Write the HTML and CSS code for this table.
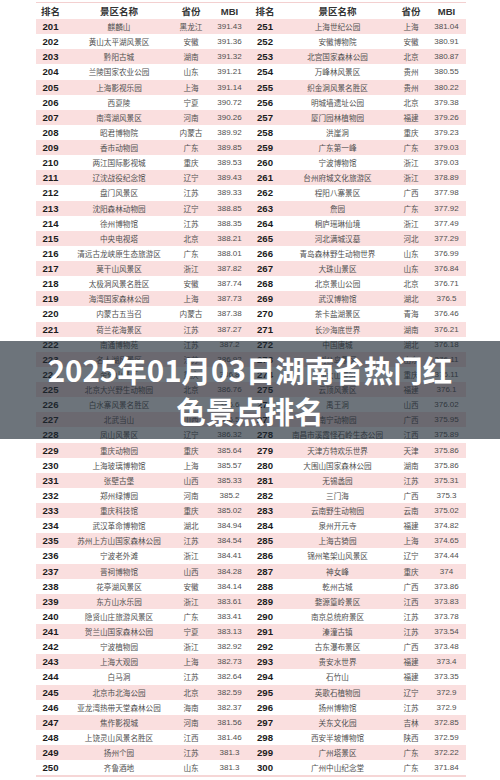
FILE: index.html
```html
<!DOCTYPE html>
<html lang="zh-CN">
<head>
<meta charset="utf-8">
<title>2025年01月03日湖南省热门红色景点排名</title>
<link rel="stylesheet" href="styles.css">
</head>
<body>
<div class="table">
  <div class="row head"><span>排名</span><span>景区名称</span><span>省份</span><span>MBI</span><span>排名</span><span>景区名称</span><span>省份</span><span>MBI</span></div>
  <div class="row alt"><span class="rk">201</span><span class="nm">麒麟山</span><span class="pv">黑龙江</span><span class="mb">391.43</span><span class="rk">251</span><span class="nm">上海世纪公园</span><span class="pv">上海</span><span class="mb">381.04</span></div>
  <div class="row"><span class="rk">202</span><span class="nm">黄山太平湖风景区</span><span class="pv">安徽</span><span class="mb">391.36</span><span class="rk">252</span><span class="nm">安徽博物院</span><span class="pv">安徽</span><span class="mb">380.91</span></div>
  <div class="row alt"><span class="rk">203</span><span class="nm">黔阳古城</span><span class="pv">湖南</span><span class="mb">391.32</span><span class="rk">253</span><span class="nm">北宫国家森林公园</span><span class="pv">北京</span><span class="mb">380.87</span></div>
  <div class="row"><span class="rk">204</span><span class="nm">兰陵国家农业公园</span><span class="pv">山东</span><span class="mb">391.21</span><span class="rk">254</span><span class="nm">万峰林风景区</span><span class="pv">贵州</span><span class="mb">380.55</span></div>
  <div class="row alt"><span class="rk">205</span><span class="nm">上海影视乐园</span><span class="pv">上海</span><span class="mb">391.14</span><span class="rk">255</span><span class="nm">织金洞风景名胜区</span><span class="pv">贵州</span><span class="mb">380.22</span></div>
  <div class="row"><span class="rk">206</span><span class="nm">西夏陵</span><span class="pv">宁夏</span><span class="mb">390.72</span><span class="rk">256</span><span class="nm">明城墙遗址公园</span><span class="pv">北京</span><span class="mb">379.38</span></div>
  <div class="row alt"><span class="rk">207</span><span class="nm">南湾湖风景区</span><span class="pv">河南</span><span class="mb">390.26</span><span class="rk">257</span><span class="nm">厦门园林植物园</span><span class="pv">福建</span><span class="mb">379.26</span></div>
  <div class="row"><span class="rk">208</span><span class="nm">昭君博物院</span><span class="pv">内蒙古</span><span class="mb">389.92</span><span class="rk">258</span><span class="nm">洪崖洞</span><span class="pv">重庆</span><span class="mb">379.23</span></div>
  <div class="row alt"><span class="rk">209</span><span class="nm">香市动物园</span><span class="pv">广东</span><span class="mb">389.85</span><span class="rk">259</span><span class="nm">广东第一峰</span><span class="pv">广东</span><span class="mb">379.03</span></div>
  <div class="row"><span class="rk">210</span><span class="nm">两江国际影视城</span><span class="pv">重庆</span><span class="mb">389.53</span><span class="rk">260</span><span class="nm">宁波博物馆</span><span class="pv">浙江</span><span class="mb">379.03</span></div>
  <div class="row alt"><span class="rk">211</span><span class="nm">辽沈战役纪念馆</span><span class="pv">辽宁</span><span class="mb">389.43</span><span class="rk">261</span><span class="nm">台州府城文化旅游区</span><span class="pv">浙江</span><span class="mb">378.89</span></div>
  <div class="row"><span class="rk">212</span><span class="nm">盘门风景区</span><span class="pv">江苏</span><span class="mb">389.33</span><span class="rk">262</span><span class="nm">程阳八寨景区</span><span class="pv">广西</span><span class="mb">377.98</span></div>
  <div class="row alt"><span class="rk">213</span><span class="nm">沈阳森林动物园</span><span class="pv">辽宁</span><span class="mb">388.85</span><span class="rk">263</span><span class="nm">詹园</span><span class="pv">广东</span><span class="mb">377.92</span></div>
  <div class="row"><span class="rk">214</span><span class="nm">徐州博物馆</span><span class="pv">江苏</span><span class="mb">388.35</span><span class="rk">264</span><span class="nm">桐庐瑶琳仙境</span><span class="pv">浙江</span><span class="mb">377.49</span></div>
  <div class="row alt"><span class="rk">215</span><span class="nm">中央电视塔</span><span class="pv">北京</span><span class="mb">388.21</span><span class="rk">265</span><span class="nm">河北满城汉墓</span><span class="pv">河北</span><span class="mb">377.29</span></div>
  <div class="row"><span class="rk">216</span><span class="nm">清远古龙峡原生态旅游区</span><span class="pv">广东</span><span class="mb">388.01</span><span class="rk">266</span><span class="nm">青岛森林野生动物世界</span><span class="pv">山东</span><span class="mb">376.99</span></div>
  <div class="row alt"><span class="rk">217</span><span class="nm">莫干山风景区</span><span class="pv">浙江</span><span class="mb">387.82</span><span class="rk">267</span><span class="nm">大珠山景区</span><span class="pv">山东</span><span class="mb">376.84</span></div>
  <div class="row"><span class="rk">218</span><span class="nm">太极洞风景名胜区</span><span class="pv">安徽</span><span class="mb">387.74</span><span class="rk">268</span><span class="nm">北京景山公园</span><span class="pv">北京</span><span class="mb">376.71</span></div>
  <div class="row alt"><span class="rk">219</span><span class="nm">海湾国家森林公园</span><span class="pv">上海</span><span class="mb">387.73</span><span class="rk">269</span><span class="nm">武汉博物馆</span><span class="pv">湖北</span><span class="mb">376.5</span></div>
  <div class="row"><span class="rk">220</span><span class="nm">内蒙古五当召</span><span class="pv">内蒙古</span><span class="mb">387.38</span><span class="rk">270</span><span class="nm">茶卡盐湖景区</span><span class="pv">青海</span><span class="mb">376.46</span></div>
  <div class="row alt"><span class="rk">221</span><span class="nm">荷兰花海景区</span><span class="pv">江苏</span><span class="mb">387.27</span><span class="rk">271</span><span class="nm">长沙海底世界</span><span class="pv">湖南</span><span class="mb">376.21</span></div>
  <div class="row"><span class="rk">222</span><span class="nm">南通博物苑</span><span class="pv">江苏</span><span class="mb">387.2</span><span class="rk">272</span><span class="nm">中国唐城</span><span class="pv">湖北</span><span class="mb">376.18</span></div>
  <div class="row alt"><span class="rk">223</span><span class="nm">名人湖风景区</span><span class="pv">江苏</span><span class="mb">386.92</span><span class="rk">273</span><span class="nm">刘公岛景区</span><span class="pv">山东</span><span class="mb">376.11</span></div>
  <div class="row"><span class="rk">224</span><span class="nm">金佛山景区</span><span class="pv">重庆</span><span class="mb">386.8</span><span class="rk">274</span><span class="nm">仙女山景区</span><span class="pv">重庆</span><span class="mb">376.11</span></div>
  <div class="row alt"><span class="rk">225</span><span class="nm">北京大兴野生动物园</span><span class="pv">北京</span><span class="mb">386.76</span><span class="rk">275</span><span class="nm">云顶风景区</span><span class="pv">福建</span><span class="mb">376.1</span></div>
  <div class="row"><span class="rk">226</span><span class="nm">白水寨风景名胜区</span><span class="pv">广东</span><span class="mb">386.6</span><span class="rk">276</span><span class="nm">禹王洞</span><span class="pv">山西</span><span class="mb">376.02</span></div>
  <div class="row alt"><span class="rk">227</span><span class="nm">北武当山</span><span class="pv">山西</span><span class="mb">386.5</span><span class="rk">277</span><span class="nm">南宁动物园</span><span class="pv">广西</span><span class="mb">375.95</span></div>
  <div class="row"><span class="rk">228</span><span class="nm">凤山风景区</span><span class="pv">辽宁</span><span class="mb">386.32</span><span class="rk">278</span><span class="nm">南昌市溪霞怪石岭生态公园</span><span class="pv">江西</span><span class="mb">375.89</span></div>
  <div class="row alt"><span class="rk">229</span><span class="nm">重庆动物园</span><span class="pv">重庆</span><span class="mb">385.64</span><span class="rk">279</span><span class="nm">天津方特欢乐世界</span><span class="pv">天津</span><span class="mb">375.86</span></div>
  <div class="row"><span class="rk">230</span><span class="nm">上海玻璃博物馆</span><span class="pv">上海</span><span class="mb">385.57</span><span class="rk">280</span><span class="nm">大围山国家森林公园</span><span class="pv">湖南</span><span class="mb">375.86</span></div>
  <div class="row alt"><span class="rk">231</span><span class="nm">张壁古堡</span><span class="pv">山西</span><span class="mb">385.33</span><span class="rk">281</span><span class="nm">无锡蠡园</span><span class="pv">江苏</span><span class="mb">375.31</span></div>
  <div class="row"><span class="rk">232</span><span class="nm">郑州绿博园</span><span class="pv">河南</span><span class="mb">385.2</span><span class="rk">282</span><span class="nm">三门海</span><span class="pv">广西</span><span class="mb">375.3</span></div>
  <div class="row alt"><span class="rk">233</span><span class="nm">重庆科技馆</span><span class="pv">重庆</span><span class="mb">385.02</span><span class="rk">283</span><span class="nm">云南野生动物园</span><span class="pv">云南</span><span class="mb">375.02</span></div>
  <div class="row"><span class="rk">234</span><span class="nm">武汉革命博物馆</span><span class="pv">湖北</span><span class="mb">384.94</span><span class="rk">284</span><span class="nm">泉州开元寺</span><span class="pv">福建</span><span class="mb">374.82</span></div>
  <div class="row alt"><span class="rk">235</span><span class="nm">苏州上方山国家森林公园</span><span class="pv">江苏</span><span class="mb">384.54</span><span class="rk">285</span><span class="nm">上海古猗园</span><span class="pv">上海</span><span class="mb">374.65</span></div>
  <div class="row"><span class="rk">236</span><span class="nm">宁波老外滩</span><span class="pv">浙江</span><span class="mb">384.41</span><span class="rk">286</span><span class="nm">锦州笔架山风景区</span><span class="pv">辽宁</span><span class="mb">374.44</span></div>
  <div class="row alt"><span class="rk">237</span><span class="nm">晋祠博物馆</span><span class="pv">山西</span><span class="mb">384.28</span><span class="rk">287</span><span class="nm">神女峰</span><span class="pv">重庆</span><span class="mb">374</span></div>
  <div class="row"><span class="rk">238</span><span class="nm">花亭湖风景区</span><span class="pv">安徽</span><span class="mb">384.14</span><span class="rk">288</span><span class="nm">乾州古城</span><span class="pv">广西</span><span class="mb">373.86</span></div>
  <div class="row alt"><span class="rk">239</span><span class="nm">东方山水乐园</span><span class="pv">浙江</span><span class="mb">383.61</span><span class="rk">289</span><span class="nm">婺源篁岭景区</span><span class="pv">江西</span><span class="mb">373.83</span></div>
  <div class="row"><span class="rk">240</span><span class="nm">隐贤山庄旅游风景区</span><span class="pv">广东</span><span class="mb">383.41</span><span class="rk">290</span><span class="nm">南京总统府景区</span><span class="pv">江苏</span><span class="mb">373.78</span></div>
  <div class="row alt"><span class="rk">241</span><span class="nm">贺兰山国家森林公园</span><span class="pv">宁夏</span><span class="mb">383.13</span><span class="rk">291</span><span class="nm">溱潼古镇</span><span class="pv">江苏</span><span class="mb">373.54</span></div>
  <div class="row"><span class="rk">242</span><span class="nm">宁波植物园</span><span class="pv">浙江</span><span class="mb">382.92</span><span class="rk">292</span><span class="nm">古东瀑布景区</span><span class="pv">广西</span><span class="mb">373.48</span></div>
  <div class="row alt"><span class="rk">243</span><span class="nm">上海大观园</span><span class="pv">上海</span><span class="mb">382.73</span><span class="rk">293</span><span class="nm">贵安水世界</span><span class="pv">福建</span><span class="mb">373.4</span></div>
  <div class="row"><span class="rk">244</span><span class="nm">白马洞</span><span class="pv">江苏</span><span class="mb">382.64</span><span class="rk">294</span><span class="nm">石竹山</span><span class="pv">福建</span><span class="mb">373.35</span></div>
  <div class="row alt"><span class="rk">245</span><span class="nm">北京市北海公园</span><span class="pv">北京</span><span class="mb">382.59</span><span class="rk">295</span><span class="nm">英歌石植物园</span><span class="pv">辽宁</span><span class="mb">372.9</span></div>
  <div class="row"><span class="rk">246</span><span class="nm">亚龙湾热带天堂森林公园</span><span class="pv">海南</span><span class="mb">382.37</span><span class="rk">296</span><span class="nm">扬州博物馆</span><span class="pv">江苏</span><span class="mb">372.9</span></div>
  <div class="row alt"><span class="rk">247</span><span class="nm">焦作影视城</span><span class="pv">河南</span><span class="mb">381.56</span><span class="rk">297</span><span class="nm">关东文化园</span><span class="pv">吉林</span><span class="mb">372.85</span></div>
  <div class="row"><span class="rk">248</span><span class="nm">上饶灵山风景名胜区</span><span class="pv">江西</span><span class="mb">381.46</span><span class="rk">298</span><span class="nm">西安半坡博物馆</span><span class="pv">陕西</span><span class="mb">372.59</span></div>
  <div class="row alt"><span class="rk">249</span><span class="nm">扬州个园</span><span class="pv">江苏</span><span class="mb">381.3</span><span class="rk">299</span><span class="nm">广州塔景区</span><span class="pv">广东</span><span class="mb">372.22</span></div>
  <div class="row"><span class="rk">250</span><span class="nm">齐鲁酒地</span><span class="pv">山东</span><span class="mb">381.3</span><span class="rk">300</span><span class="nm">广州中山纪念堂</span><span class="pv">广东</span><span class="mb">371.84</span></div>
</div>
<div class="banner">
  <h1 class="title">2025年01月03日湖南省热门红<br>色景点排名</h1>
</div>
</body>
</html>
```

FILE: styles.css
```css
html, body {
  margin: 0;
  padding: 0;
  background: #ffffff;
}

body {
  font-family: "Liberation Sans", "Noto Sans CJK SC", sans-serif;
  width: 500px;
  height: 780px;
  overflow: hidden;
}

.table {
  width: 430px;
  margin: 2px 0 0 36px;
  border-top: 1px solid #f3d0d0;
  border-bottom: 2px solid #f6d6d6;
}

.row {
  display: grid;
  grid-template-columns: 29px 108px 36px 41px 30px 115px 32px 39px;
  height: 15.13px;
  align-items: center;
  text-align: center;
  white-space: nowrap;
}

.row span {
  display: block;
  line-height: 15px;
}

.row.alt {
  background: #fadfdf;
}

.head {
  height: 16px;
  font-weight: 700;
  font-size: 9.5px;
  color: #333333;
}

.head span {
  line-height: 17px;
}

.rk {
  font-weight: 700;
  font-size: 9.6px;
  color: #1c1c1c;
}

.nm,
.pv {
  font-family: "Noto Sans CJK SC", sans-serif;
  font-size: 7.6px;
  color: #505050;
}

.mb {
  font-size: 8px;
  color: #505050;
}

.banner {
  position: absolute;
  left: 0;
  top: 341px;
  width: 500px;
  height: 98px;
  background: rgba(30, 42, 52, 0.65);
  display: flex;
  align-items: center;
  justify-content: center;
}

.title {
  margin: 0;
  color: #ffffff;
  font-family: "Noto Sans CJK SC", sans-serif;
  font-weight: 700;
  font-size: 29.5px;
  line-height: 41px;
  text-align: center;
}
```
